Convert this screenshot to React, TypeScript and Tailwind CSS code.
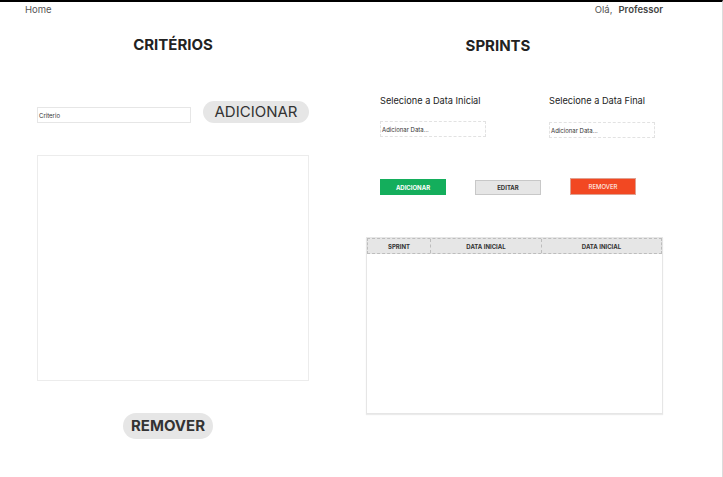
import React from "react";

export default function App() {
  return (
    <div
      className="w-[723px] h-[477px] bg-white border-t-2 border-black border-r border-r-[#dcdcdc] overflow-hidden flex flex-col"
      style={{ fontFamily: "Inter, 'Noto Sans', sans-serif" }}
    >
      <header className="h-[16px] flex items-center justify-between pl-[25px] pr-[59px] text-[9.5px] text-[#555]">
        <span>Home</span>
        <span>
          Olá,<span className="ml-[6px] font-semibold text-[#444]">Professor</span>
        </span>
      </header>

      <div className="flex">
        {/* Left column */}
        <section className="ml-[37px] w-[272px] flex flex-col">
          <h2 className="mt-[17px] h-[20px] leading-[20px] text-center text-[15px] font-bold text-[#222]">
            CRITÉRIOS
          </h2>
          <div className="mt-[46px] flex items-end gap-[12px]">
            <div className="w-[154px] h-[16px] border border-[#e6e6e6] flex items-center px-[1px] text-[6px] text-[#333]">
              Criterio
            </div>
            <button className="w-[106px] h-[22px] rounded-full bg-[#e6e6e6] text-[15px] leading-[22px] text-[#333]">
              ADICIONAR
            </button>
          </div>
          <div className="mt-[32px] h-[226px] border border-[#ececec]" />
          <button className="mt-[32px] ml-[86px] w-[90px] h-[26px] rounded-full bg-[#e6e6e6] text-[15px] font-bold text-[#333]">
            REMOVER
          </button>
        </section>

        {/* Right column */}
        <section className="ml-[57px] w-[297px] flex flex-col">
          <h2 className="mt-[18px] w-[264px] h-[20px] leading-[20px] text-center text-[15px] font-bold text-[#222]">
            SPRINTS
          </h2>
          <div className="mt-[39px] ml-[14px] flex">
            <div className="w-[169px] flex flex-col">
              <span className="h-[12px] leading-[12px] text-[9.2px] text-[#222]">Selecione a Data Inicial</span>
              <div className="mt-[14px] w-[106px] h-[16px] border border-dashed border-[#e2e2e2] flex items-center px-[1px] text-[6px] text-[#333]">
                Adicionar Data...
              </div>
            </div>
            <div className="flex flex-col">
              <span className="h-[12px] leading-[12px] text-[9.2px] text-[#222]">Selecione a Data Final</span>
              <div className="mt-[15px] w-[106px] h-[16px] border border-dashed border-[#e2e2e2] flex items-center px-[1px] text-[6px] text-[#333]">
                Adicionar Data...
              </div>
            </div>
          </div>
          <div className="mt-[41px] ml-[14px] flex items-start gap-[29px]">
            <button className="w-[66px] h-[16px] bg-[#14ae5c] text-white text-[6px] font-bold">ADICIONAR</button>
            <button className="mt-[1px] w-[66px] h-[15px] bg-[#e6e6e6] border border-[#c8c8c8] text-[#333] text-[6px] font-bold">
              EDITAR
            </button>
            <button className="-mt-[1px] w-[66px] h-[17px] bg-[#f24822] border border-[#e0a090] text-white text-[6px]">
              REMOVER
            </button>
          </div>
          <div className="mt-[42px] h-[177px] border border-[#e6e6e6] shadow-[0_1px_1px_rgba(0,0,0,0.08)] flex flex-col">
            <div className="h-[16px] bg-[#e6e6e6] border border-dashed border-[#bdbdbd] flex text-[6px] font-bold text-[#333]">
              <div className="w-[63px] flex items-center justify-center border-r border-dashed border-[#bdbdbd]">SPRINT</div>
              <div className="w-[111px] flex items-center justify-center border-r border-dashed border-[#bdbdbd]">DATA INICIAL</div>
              <div className="flex-1 flex items-center justify-center">DATA INICIAL</div>
            </div>
          </div>
        </section>
      </div>
    </div>
  );
}
